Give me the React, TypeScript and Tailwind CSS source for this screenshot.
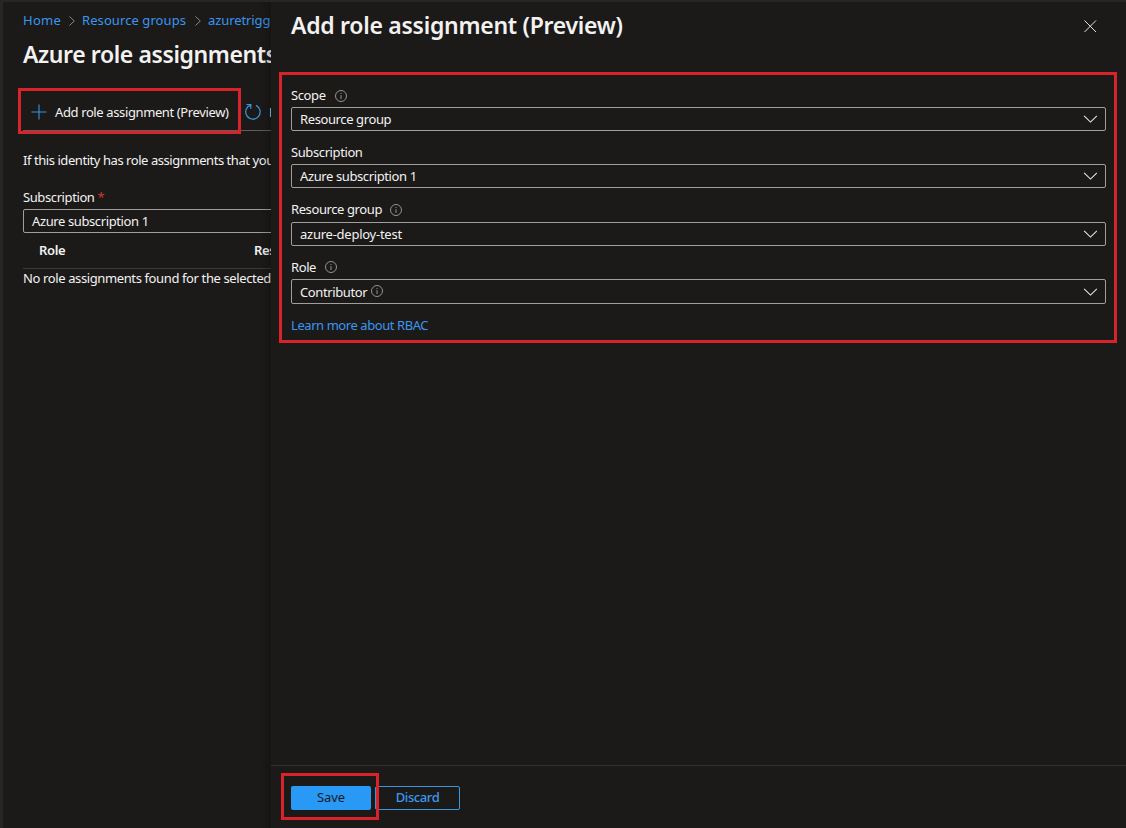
import type { ReactNode } from "react";

function InfoIcon({ className = "" }: { className?: string }) {
  return (
    <svg viewBox="0 0 12 12" className={"h-3 w-3 shrink-0 " + className} fill="none" stroke="#a19f9d">
      <circle cx="6" cy="6" r="5.5" strokeWidth="0.9" />
      <path d="M6 5.1V9M6 3v1" strokeWidth="0.9" />
    </svg>
  );
}

function Chevron() {
  return (
    <svg viewBox="0 0 14 8" className="h-2 w-3.5 shrink-0" fill="none" stroke="#e6e4e2" strokeWidth="1.1">
      <path d="M1.1 0.9L7.5 7.1L13.9 0.9" />
    </svg>
  );
}

function Crumb() {
  return (
    <svg viewBox="0 0 6 10" className="h-2.5 w-1.5 shrink-0" fill="none" stroke="#8a8886" strokeWidth="1">
      <path d="M0.5 0.5L5.3 5L0.5 9.5" />
    </svg>
  );
}

function Label({ children }: { children: ReactNode }) {
  return <div className="flex h-[22px] items-center text-[13px] tracking-[-0.4px]">{children}</div>;
}

function Select({ children, className = "h-6" }: { children: ReactNode; className?: string }) {
  return (
    <div className={"flex items-center justify-between rounded-xs border border-[#a19f9d] pr-2 pl-2 text-[13px] tracking-[-0.39px] " + className}>
      <div className="flex items-center pt-0.5">{children}</div>
      <Chevron />
    </div>
  );
}

export default function App() {
  return (
    <div className="relative flex h-[828px] w-[1126px] overflow-hidden border-t-2 border-[#272625] bg-[#1b1a19] font-['Noto_Sans','Open_Sans',sans-serif] whitespace-nowrap text-[#f3f2f1]">
      <main className="relative h-full w-[271px] shrink-0 overflow-hidden border-l-3 border-[#272625] pl-5">
        <nav className="flex h-9 w-max items-center pt-0.5 text-[13px] tracking-[0.08px] text-[#3a96ef]">
          <a className="w-[38px] tracking-[0.25px]">Home</a>
          <span className="flex w-[21px] justify-center"><Crumb /></span>
          <a className="w-[105px]">Resource groups</a>
          <span className="flex w-[21px] justify-center"><Crumb /></span>
          <a className="tracking-[-0.1px]">azuretrigg</a>
        </nav>
        <h1 className="flex h-8 w-max items-center text-[23px] font-semibold tracking-[-0.4px]">Azure role assignments</h1>
        <div className="mt-[19px] flex h-[42px] w-[248px] items-center border-b border-[#605e5c] pt-1 pl-2 text-[13px] tracking-[-0.38px]">
          <svg viewBox="0 0 16 16" className="h-4 w-4 shrink-0" stroke="#3a96dd" strokeWidth="1.1">
            <path d="M8 0.5V15.5M0.5 8H15.5" />
          </svg>
          <span className="ml-2 w-[190px] shrink-0 pt-[3px]">Add role assignment (Preview)</span>
          <svg viewBox="0 0 16 18" className="h-[18px] w-4 shrink-0" fill="none" stroke="#3a96dd" strokeWidth="1.2">
            <path d="M11 2.4A7.2 7.2 0 1 1 5.6 2.1M1.4 1.5H5.8V5.8" />
          </svg>
          <span className="ml-2 pt-[3px]">R</span>
        </div>
        <p className="mt-5 flex h-5 w-max items-center text-[13px] tracking-[-0.44px]">If this identity has role assignments that you</p>
        <div className="mt-[17px] flex h-5 items-center text-[13px]">
          <span className="tracking-[-0.4px]">Subscription</span><span className="ml-[3px] text-[#d13438]">*</span>
        </div>
        <div className="mt-px w-[600px]">
          <Select><span>Azure subscription 1</span></Select>
        </div>
        <div className="flex h-9 w-[600px] items-center border-b border-[#3b3a39] pl-4 text-[13px] font-semibold tracking-[-0.35px]">
          <span className="w-[215px]">Role</span><span>Res</span>
        </div>
        <p className="flex h-5 w-max items-center text-[13px] tracking-[-0.38px]">No role assignments found for the selected</p>
        <div className="absolute top-0 right-0 h-full w-3 bg-linear-to-r from-transparent to-black/20" />
      </main>

      <section className="flex h-full min-w-0 flex-1 flex-col bg-[#1b1a19]">
        <header className="flex h-12 items-center justify-between pr-[29px] pl-5">
          <h2 className="pb-0.5 text-[23px] font-semibold tracking-[-0.28px]">Add role assignment (Preview)</h2>
          <svg viewBox="0 0 13 13" className="h-[13px] w-[13px]" stroke="#e6e4e2" strokeWidth="1">
            <path d="M0.5 0.5L12 12M12 0.5L0.5 12" />
          </svg>
        </header>
        <div className="flex-1 pt-[35px] pr-5 pl-5">
          <Label><span>Scope</span><InfoIcon className="ml-[9px]" /></Label>
          <Select><span>Resource group</span></Select>
          <div className="h-[11px]" />
          <Label><span>Subscription</span></Label>
          <Select><span>Azure subscription 1</span></Select>
          <div className="h-[11px]" />
          <Label><span>Resource group</span><InfoIcon className="ml-2" /></Label>
          <Select className="mt-px h-6"><span className="tracking-[-0.25px]">azure-deploy-test</span></Select>
          <div className="h-[10px]" />
          <Label><span className="pt-0.5">Role</span><InfoIcon className="ml-[9px]" /></Label>
          <Select className="mt-px h-[25px]"><span>Contributor</span><InfoIcon className="mb-[3px] ml-1" /></Select>
          <a className="mt-3 flex h-5 w-max items-center text-[13px] tracking-[-0.43px] text-[#3a96ef]">Learn more about RBAC</a>
        </div>
        <footer className="flex h-[63px] items-start gap-1 border-t border-[#323130] pt-5 pl-5 text-[13px]">
          <button className="flex h-6 w-20 items-center justify-center rounded-xs bg-[#2899f5] tracking-[-0.15px] text-[#1b1a19]">Save</button>
          <button className="flex h-6 w-[85px] items-center justify-center rounded-xs border border-[#3a96dd] font-medium tracking-[-0.4px] text-[#3a96ef]">Discard</button>
        </footer>
      </section>

      <div className="absolute top-[86px] left-[18px] h-[46px] w-[223px] border-3 border-[#d9232b]" />
      <div className="absolute top-[70px] left-[279px] h-[271px] w-[838px] border-3 border-[#d9232b]" />
      <div className="absolute top-[771px] left-[281px] h-[47px] w-[98px] border-3 border-[#d9232b]" />
    </div>
  );
}
